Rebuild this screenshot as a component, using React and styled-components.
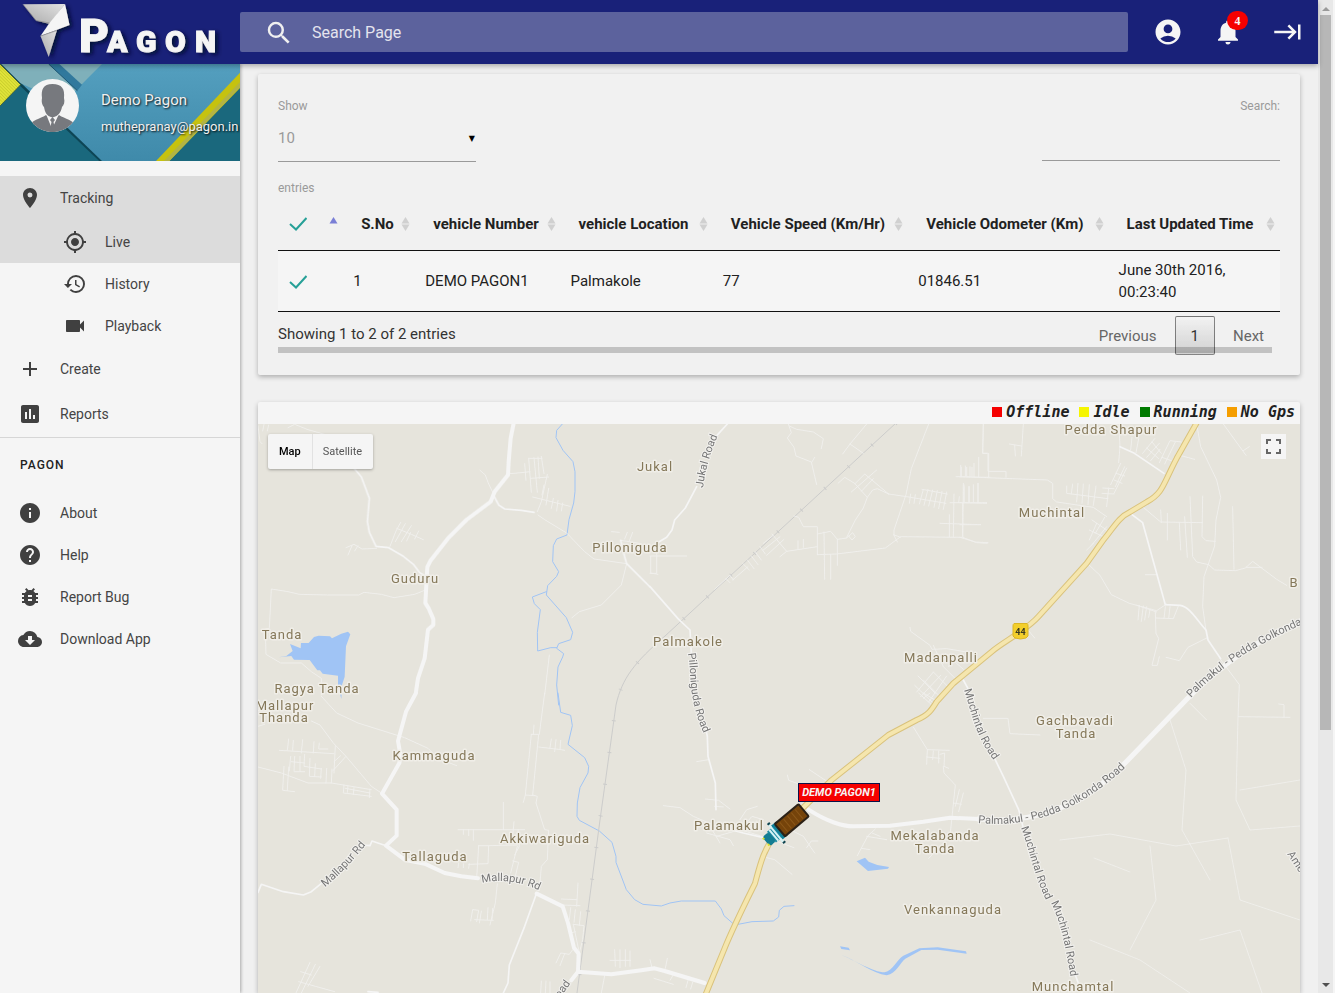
import React, { useState } from "react";
import styled, { createGlobalStyle, css } from "styled-components";
import {
  MdAccountCircle, MdAdd, MdAssessment, MdBugReport, MdCloudDownload, MdHelp, MdHistory,
  MdInfo, MdKeyboardTab, MdLocationOn, MdMyLocation, MdNotifications, MdSearch, MdVideocam,
} from "react-icons/md";

const GlobalStyle = createGlobalStyle`
  * { box-sizing: border-box; }
  body {
    margin: 0;
    background: #f0f0f0;
    color: #212121;
    font: 15px/22px Roboto, "Liberation Sans", sans-serif;
  }
  button, input, select { font: inherit; color: inherit; border: 0; margin: 0; padding: 0; background: none; outline: 0; }
  button { cursor: pointer; }
  ul { list-style: none; margin: 0; padding: 0; }
  a { color: inherit; text-decoration: none; }
`;

/* ---------- page frame ---------- */

const Shell = styled.div`
  display: grid;
  grid-template-columns: minmax(0, 1fr) 17px;
  height: 100vh;
  overflow: hidden;
`;

const Page = styled.div`
  display: grid;
  grid-template: 64px minmax(0, 1fr) / 240px minmax(0, 1fr);
  grid-template-areas: "top top" "side main";
  height: 100vh;
`;

const TopBar = styled.header`
  grid-area: top;
  z-index: 3;
  display: grid;
  grid-template-columns: 240px minmax(0, 1fr) auto;
  align-items: center;
  background: #192179;
  box-shadow: 0 2px 5px rgba(0, 0, 0, 0.3);
`;

const LogoLink = styled.a`
  display: block;
  height: 64px;
`;

const SearchBox = styled.label`
  display: flex;
  align-items: center;
  gap: 18px;
  height: 40px;
  margin-right: 10px;
  padding: 2px 0 0 24px;
  border-radius: 2px;
  background: #5c629d;
  color: #f0f0f0;
`;

const SearchInput = styled.input`
  flex: 1;
  min-width: 0;
  font-size: 16px;
  &::placeholder { color: #e4e4ee; opacity: 1; }
`;

const TopActions = styled.nav`
  display: flex;
`;

const TopButton = styled.button`
  position: relative;
  display: grid;
  place-items: center;
  width: 60px;
  height: 64px;
  color: #f5f5f5;
`;

const Badge = styled.span`
  position: absolute;
  top: 11px;
  left: 29px;
  width: 21px;
  height: 19px;
  border-radius: 10px;
  background: #f50000;
  font: bold 12px/20px "Liberation Serif", serif;
  text-align: center;
`;

const ScrollRail = styled.div`
  display: flex;
  flex-direction: column;
  align-items: center;
  gap: 4px;
  height: 100vh;
  padding: 7px 0 6px;
  border-right: 2px solid #f5f5f5;
  background: #e8e8e8;
`;

const RailArrow = styled.i`
  border: 4px solid transparent;
  ${(p) => (p.$down
    ? css`border-top-color: #505050; border-bottom: 0; margin-top: auto;`
    : css`border-bottom-color: #9a9a9a; border-top: 0;`)}
`;

const RailThumb = styled.i`
  width: 11px;
  height: 73%;
  background: #b7b7b7;
`;

/* ---------- sidebar ---------- */

const Sidebar = styled.aside`
  grid-area: side;
  z-index: 2;
  background: #f5f5f5;
  box-shadow: 1px 0 3px rgba(0, 0, 0, 0.3);
`;

const Profile = styled.section`
  position: relative;
  display: grid;
  grid-template-columns: 53px 1fr;
  gap: 22px;
  height: 97px;
  padding: 15px 0 0 26px;
  overflow: hidden;
`;

const ProfileArt = styled.svg`
  position: absolute;
  inset: 0;
  width: 100%;
  height: 100%;
`;

const Avatar = styled.svg`
  position: relative;
  width: 53px;
  height: 53px;
`;

const ProfileText = styled.div`
  position: relative;
  padding-top: 10px;
  color: #f0f0f0;
  text-shadow: 1px 1px 2px rgba(0, 0, 0, 0.9);
  white-space: nowrap;
`;

const ProfileName = styled.div`
  font-size: 15px;
  line-height: 22px;
`;

const ProfileMail = styled.div`
  margin-top: 6px;
  font-size: 13px;
  line-height: 20px;
`;

const MenuGroup = styled.ul`
  ${(p) => p.$main && css`
    margin-top: 15px;
    border-bottom: 1px solid #d6d6d6;
  `}
`;

const MenuLink = styled.a`
  display: flex;
  align-items: center;
  height: ${(p) => (p.$tall ? 45 : 42)}px;
  padding: 0 0 ${(p) => (p.$tall ? 2 : 0)}px ${(p) => (p.$sub ? 63 : 18)}px;
  gap: 18px;
  background: ${(p) => (p.$active ? "#dcdcdc" : "transparent")};
  color: #444;
  font-size: 14px;
  svg { flex: none; color: #404040; }
`;

const MenuHeading = styled.h2`
  margin: 0;
  padding-left: 20px;
  color: #222;
  font-size: 12px;
  font-weight: 500;
  line-height: 54px;
  letter-spacing: 1px;
`;

/* ---------- main column ---------- */

const Main = styled.main`
  grid-area: main;
  display: flex;
  flex-direction: column;
  gap: 27px;
  min-height: 0;
  padding: 10px 18px 0;
  overflow: hidden;
`;

const Card = styled.section`
  flex: ${(p) => (p.$grow ? "1 0 0" : "none")};
  display: flex;
  flex-direction: column;
  padding: ${(p) => (p.$flush ? "0" : "20px")};
  border-radius: 2px;
  background: ${(p) => (p.$flush ? "#f5f5f5" : "#f1f1f1")};
  box-shadow: 0 2px 5px rgba(0, 0, 0, 0.28);
`;

const Controls = styled.div`
  display: flex;
  justify-content: space-between;
  height: 105px;
  padding-top: 1px;
  color: #9a9a9a;
  font-size: 12px;
`;

const Field = styled.div`
  display: flex;
  flex-direction: column;
  width: ${(p) => (p.$right ? 238 : 198)}px;
  text-align: ${(p) => (p.$right ? "right" : "left")};
`;

const SelectWrap = styled.div`
  display: grid;
  align-items: center;
  border-bottom: 1px solid #9a9a9a;
  margin-bottom: 15px;
`;

const LengthSelect = styled.select`
  grid-area: 1 / 1;
  appearance: none;
  height: 44px;
  padding-bottom: 2px;
  font-size: 15px;
`;

const SelectArrow = styled.span`
  grid-area: 1 / 1;
  justify-self: end;
  padding-right: 1px;
  color: #000;
  font: 8px/12px "DejaVu Sans", sans-serif;
  pointer-events: none;
`;

const FilterInput = styled.input`
  height: 44px;
  border-bottom: 1px solid #9a9a9a;
  font-size: 15px;
`;

const DataTable = styled.table`
  width: 100%;
  table-layout: fixed;
  border-collapse: separate;
  border-spacing: 0;
`;

const Col = styled.col`
  width: ${(p) => p.$w}%;
`;

const HeadCell = styled.th`
  height: 52px;
  padding: 0 5px 2px ${(p) => (p.$tick ? 11 : 18)}px;
  border-bottom: 1px solid #111;
  text-align: left;
  white-space: nowrap;
`;

const HeadInner = styled.div`
  display: flex;
  align-items: center;
  justify-content: space-between;
`;

const SortButton = styled.button`
  display: grid;
  width: 9px;
  height: 14px;
`;

const BodyCell = styled.td`
  height: 61px;
  padding: 8px 10px;
  border-bottom: 1px solid #111;
  background: #f5f5f5;
  &:first-child { padding-left: 11px; }
`;

const TickLabel = styled.label`
  display: inline-grid;
  vertical-align: middle;
  > * { grid-area: 1 / 1; width: 18px; height: 14px; margin: 0; }
  input { opacity: 0; }
`;

const TableFooter = styled.footer`
  position: relative;
  display: flex;
  justify-content: space-between;
  height: 43px;
  padding-top: 4px;
`;

const FooterRail = styled.div`
  position: absolute;
  left: 0;
  right: 8px;
  bottom: 2px;
  height: 6px;
  background: #c2c2c2;
`;

const FooterInfo = styled.div`
  padding-top: 7px;
  color: #333;
`;

const Pager = styled.nav`
  position: relative;
  display: flex;
  gap: 2px;
`;

const PageButton = styled.button`
  height: 39px;
  padding: 0 15px;
  border: 1px solid transparent;
  border-radius: 2px;
  color: #666;
  ${(p) => p.$current && css`
    border-color: rgba(0, 0, 0, 0.45);
    background: linear-gradient(rgba(255, 255, 255, 0.1), rgba(0, 0, 0, 0.13));
    color: #333;
  `}
`;

/* ---------- map ---------- */

const Legend = styled.ul`
  display: flex;
  justify-content: flex-end;
  gap: 10px;
  height: 22px;
  padding-right: 5px;
  font: italic bold 15px/20px "DejaVu Sans Mono", monospace;
`;

const LegendItem = styled.li`
  display: flex;
  align-items: center;
  gap: 4px;
  height: 20px;
  &::before {
    content: "";
    width: 10px;
    height: 10px;
    background: ${(p) => p.$color};
  }
`;

const MapArea = styled.div`
  position: relative;
  flex: 1;
  min-height: 0;
  overflow: hidden;
  background: #e6e4dc;
`;

const MapSvg = styled.svg`
  position: absolute;
  inset: 0;
  width: 100%;
  height: 100%;
  font-family: Roboto, "Liberation Sans", sans-serif;
`;

const MapTypes = styled.div`
  position: absolute;
  top: 10px;
  left: 10px;
  display: flex;
  height: 35px;
  border-radius: 2px;
  background: #f5f5f5;
  box-shadow: 0 1px 3px rgba(0, 0, 0, 0.3);
`;

const MapTypeButton = styled.button`
  padding: 0 11px;
  font-size: 11px;
  color: ${(p) => (p.$on ? "#000" : "#565656")};
  font-weight: ${(p) => (p.$on ? 500 : 400)};
  & + & { border-left: 1px solid #e2e2e2; padding: 0 11px 0 10px; }
`;

const FullScreenButton = styled.button`
  position: absolute;
  top: 10px;
  right: 14px;
  display: grid;
  place-items: center;
  width: 25px;
  height: 25px;
  background: #f5f5f5;
`;

const Place = styled.text`
  font-size: 13px;
  letter-spacing: 1px;
  text-anchor: middle;
  fill: #857859;
  stroke: #f0eee8;
  stroke-width: 3px;
  stroke-linejoin: round;
  paint-order: stroke;
`;

const RoadName = styled.text`
  font-size: 11px;
  fill: #757575;
  stroke: #f2f1ee;
  stroke-width: 2px;
  paint-order: stroke;
`;

const Lines = styled.g`
  fill: none;
  stroke: ${(p) => p.$color || "#f5f5f5"};
  stroke-width: ${(p) => p.$w};
  stroke-linejoin: round;
  stroke-linecap: ${(p) => p.$cap || "round"};
  opacity: ${(p) => p.$o || 1};
`;

const TILES = {
  nw: "translate(258 395) scale(.33333)",
  n: "translate(650 420) scale(.33333)",
  ne: "translate(960 420) scale(.33333)",
  sw: "translate(258 693) scale(.33333)",
  s: "translate(640 693) scale(.33333)",
};

const PLACES = [
  ["Jukal", 655, 471], ["Pilloniguda", 630, 552], ["Guduru", 415, 583], ["Tanda", 282, 639],
  ["Ragya Tanda", 317, 693], ["Mallapur", 285, 710], ["Thanda", 284, 722], ["Kammaguda", 434, 760],
  ["Tallaguda", 435, 861], ["Akkiwariguda", 545, 843], ["Palamakul", 729, 830], ["Palmakole", 688, 646],
  ["Madanpalli", 941, 662], ["Muchintal", 1052, 517], ["Pedda Shapur", 1111, 434],
  ["Gachbavadi", 1075, 725], ["Tanda", 1076, 738], ["Mekalabanda", 935, 840], ["Tanda", 935, 853],
  ["Venkannaguda", 953, 914], ["Munchamtal", 1073, 991], ["B", 1294, 587],
];

const ROAD_NAMES = [
  ["jukal", "Jukal Road", "M703 488 Q706 462 720 430"],
  ["pillo", "Pilloniguda Road", "M688 653 C692 680 688 700 705 736"],
  ["much1", "Muchintal Road", "M964 690 C972 712 974 736 998 766"],
  ["much2", "Muchintal Road", "M1021 828 C1030 850 1034 878 1050 908"],
  ["much3", "Muchintal Road", "M1051 903 C1062 924 1066 950 1072 986"],
  ["golk1", "Palmakul - Pedda Golkonda Road", "M978 823 C1030 828 1080 812 1130 763"],
  ["golk2", "Palmakul - Pedda Golkonda", "M1191 698 C1225 662 1260 643 1312 620"],
  ["mal1", "Mallapur Rd", "M325 887 Q345 871 368 842"],
  ["mal2", "Mallapur Rd", "M482 883 Q512 876 545 893"],
  ["road", "Road", "M556 1004 L578 973"],
  ["ame", "Amee", "M1287 854 L1312 892"],
];

const HIGHWAY = "M712 5 L650 115 C610 190 610 220 560 246 L510 276 C475 292 460 325 430 360 L380 430 L235 590 C200 630 130 665 95 695 L-20 790 L-70 845 C-85 870 -95 885 -130 900 L-215 945 L-385 1080 L-555 1245 C-590 1290 -600 1335 -615 1390 C-650 1460 -670 1500 -700 1570 L-770 1740";
const RAILWAY = "M896 423 L665 636 C635 662 622 678 616 705 L600 820 577 993";

function MapDrawing() {
  return (
    <MapSvg viewBox="258 424 1042 569" preserveAspectRatio="xMinYMin slice" role="img" aria-label="Map of Palmakole">
      <g transform={TILES.nw} fill="#a0c4f5">
        <path d="M62 787 L85 783 104 768 96 747 128 760 129 744 152 744 168 726 182 722 216 724 222 730 250 716 270 710 277 718 264 754 260 845 252 870 250 912 240 870 240 842 194 836 186 826 178 826 155 795 108 794 100 783Z" />
      </g>
      <g transform={TILES.s} fill="#a0c4f5">
        <path d="M650 505 L675 494 686 506 712 516 747 522 744 527 684 534Z M600 760 L626 764 630 772 604 768Z" />
        <path d="M604 786 C640 800 700 838 734 838 C760 832 770 800 790 788 L838 766 893 763 978 775 980 782 893 770 844 771 796 797 C780 810 770 840 740 847 C700 843 650 802 604 786Z" />
      </g>

      <Lines $w={3} $color="#a0c4f5">
        <path transform={TILES.nw} d="M914 86 L896 106 894 128 915 166 945 200 951 230 951 290 947 324 933 374 927 420 896 432 886 452 884 500 902 530 896 544 869 572 865 600 925 668 944 712 938 734 902 746 896 760 917 776 914 786 900 816 896 870 902 930 M865 590 L823 606 829 626 847 644 838 712 839 768 878 758 896 758" />
        <path transform={TILES.sw} d="M900 0 L908 58 938 67 943 98 930 154 980 194 992 220 990 240 966 284 958 330 957 370 964 382 1024 414 1062 448 1074 490 1074 508 1105 590 1130 620 1155 634 1210 639 1236 630 1270 624 1372 624 1390 648 1398 668 1430 696 1482 686 1546 684 1562 672 1564 652 1578 640 1608 638" />
      </Lines>

      <Lines $w={1} $color="#cccccb">
        <path d={RAILWAY} />
      </Lines>
      <Lines $w={4} $color="#cccccb" $cap="butt">
        <path d={RAILWAY} strokeDasharray="1 31" />
      </Lines>

      <Lines $w={3} $o={0.65}>
        <path transform={TILES.nw} d="M90 98 L110 88 150 104 200 118 M666 226 L682 240 690 262 706 296 M396 454 L414 408 428 382 M416 400 L460 418 496 434 M412 440 L442 386 M430 440 L460 392 M446 438 L458 412 M470 432 L482 408 M356 460 L312 462 288 448 264 458 M270 480 L282 452 M290 468 L300 452 M840 360 L860 374 926 414 980 470 1008 492 1106 506 1090 570 1030 630 964 650 942 668 M756 236 L800 232 816 230 M812 190 L852 190 M812 190 L820 292 M828 188 L838 292 M840 186 L844 250 M850 184 L858 236 M800 206 L804 256 M818 250 L872 246 M868 238 L850 320 838 350 M858 270 L852 300 M824 306 L936 334 M872 280 L864 330 M886 310 L880 340 M900 316 L896 348 M914 324 L910 348 M500 586 L470 598 408 608 370 598 318 592 302 600 208 600 124 598 90 590 40 582 34 700 22 702 24 778 68 804 130 804 160 830 190 850 190 900 M0 92 L6 140 12 146 M18 88 L14 108 M32 90 L28 108 M1088 436 L1150 446 M1060 410 L1084 412 M1100 432 L1108 412 M1114 438 L1124 412 M874 780 L860 900 M1178 484 L1178 534 1200 538" />
        <path transform={TILES.n} d="M415 12 L424 38 412 54 432 82 438 108 484 126 500 194 M418 18 L440 28 490 36 520 56 514 86 M486 126 L494 112 M650 12 L600 72 578 102 M600 72 L640 100 M836 12 L784 146 768 224 732 330 732 346 742 366 M564 190 L584 172 614 190 632 210 652 232 M614 192 L644 162 716 222 M604 216 L680 150 M634 214 L670 176 M716 222 L682 206 668 210 652 232 640 264 616 300 590 352 M716 222 L770 230 888 250 M816 208 L892 222 M782 222 L778 250 M796 224 L792 250 M820 208 L808 252 M834 208 L822 256 M848 210 L836 258 M862 212 L852 262 M876 214 L866 266 M890 216 L880 268 M432 288 L446 292 460 320 502 320 502 404 M502 342 L542 334 562 358 590 354 608 338 616 350 606 360 596 348 M522 336 L524 478 M542 404 L542 478 M562 358 L562 436 M410 394 L502 380 M502 404 L560 402 706 384 752 350 938 352 980 368 1012 370 M730 344 L752 352 M366 342 L410 394 390 410 M340 370 L370 346 M340 390 L390 350 M350 406 L402 358 M330 380 L346 402 M316 396 L334 420 M304 408 L324 434 M292 420 L312 446 M278 430 L298 450 M248 480 L294 440 M240 466 L250 480 M228 476 L240 488 M444 362 L444 388 M460 358 L460 382 M194 508 L240 466 M0 408 L110 408 M20 400 L20 460 0 460 M940 190 L938 350 M912 222 L910 350 M898 284 L898 350 M870 310 L992 314 M900 248 L1010 248 M928 230 L926 248 M942 200 L942 248 M956 200 L956 248 M970 194 L970 248 M984 190 L984 248 M932 136 L932 170 M946 138 L946 170 M960 140 L960 170 M972 130 L972 170 M986 112 L986 170 M918 170 L1020 172 M1000 12 L998 100 1016 100 1016 170 M780 622 L782 634 840 676 846 688 890 686 950 696 M850 676 L880 740 916 776 M886 700 L940 748 M896 740 L914 710 M804 768 L856 820 M794 796 L850 850 M820 780 L870 830 M850 756 L900 806 M800 816 L850 756 M812 830 L872 766 M836 846 L890 768" />
        <path transform={TILES.ne} d="M70 12 L68 100 84 100 84 154 138 154 138 172 M0 170 L262 180 278 190 278 236 290 246 400 262 440 290 M190 12 L184 108 M148 72 L184 78 M164 76 L166 108 M4 142 L4 168 M20 142 L20 168 M36 142 L36 168 M12 194 L12 248 M28 200 L28 248 M54 190 L54 246 M0 248 L80 250 M8 250 L8 352 M0 314 L60 314 M0 352 L46 366 84 368 M320 198 L320 220 444 236 M338 192 L334 222 M354 190 L350 246 M370 192 L366 250 M388 194 L384 254 M408 198 L400 256 M428 204 L462 206 M426 220 L462 222 M440 260 L446 204 M462 220 L500 144 M452 194 L482 130 M466 200 L494 140 M462 180 L486 190 M468 160 L494 168 M476 128 L480 80 478 40 M512 90 L516 52 M528 98 L536 56 M548 100 L584 56 M560 112 L598 70 M572 122 L600 88 M560 84 L596 116 M576 66 L604 100 M598 128 L630 62 664 66 M614 132 L646 66 M632 134 L662 76 M606 112 L634 122 M652 104 L704 118 M710 12 L722 80 770 180 782 232 768 300 764 378 732 470 728 560 738 632 M396 300 L440 330 M406 340 L434 292 M388 360 L410 310 M398 372 L440 320 M380 390 L400 370 M388 330 L430 350 M384 432 L420 466 454 524 508 550 590 572 620 552 M550 262 L602 306 728 308 M602 270 L604 308 M622 280 L622 360 M658 308 L662 390 M674 290 L682 412 M690 230 L698 410 710 426 746 434 M728 228 L726 350 738 362 766 364 M746 434 L764 450 826 452 856 444 878 424 950 478 980 496 M818 260 L822 448 M858 442 L906 442 M556 464 L592 464 M538 556 L534 600 M550 558 L544 604 M560 560 L554 600 M570 568 L566 592 M530 556 L590 576 M586 576 L588 640 596 656 576 736 592 736 598 710 M588 594 L640 596 656 556 M612 596 L616 560 M626 596 L630 560 M740 654 L684 682 658 722 618 712 M790 12 L858 106 M850 92 L868 80 M780 716 L838 794 834 890 990 892 M956 852 L972 854 972 892 M690 850 L740 900 M204 630 L224 654" />
        <path transform={TILES.sw} d="M190 10 L236 60 300 90 440 134 510 166 540 196 596 218 M64 172 L228 182 M92 138 L88 172 M106 142 L104 172 M134 140 L130 180 M168 146 L166 180 M184 150 L182 168 210 168 M98 190 L94 234 M110 190 L108 236 140 236 M100 206 L140 210 M126 190 L126 236 M140 184 L138 220 190 228 M156 196 L154 250 190 252 M172 212 L170 250 M190 226 L188 256 M206 226 L204 270 M222 228 L220 270 M78 220 L74 292 110 296 M92 222 L88 292 M160 84 L186 96 226 150 264 190 340 280 370 300 M264 190 L224 234 M232 158 L228 240 M228 206 L248 188 M0 222 L70 240 150 270 220 270 340 290 M258 276 L256 300 340 310 M262 286 L336 300 M270 278 L268 298 M288 284 L286 304 M336 288 L334 314 M0 100 L20 94 M820 124 L842 124 824 306 838 310 834 330 860 410 872 412 868 500 850 520 844 592 M828 96 L826 124 M820 124 L802 306 830 308 M802 306 L796 328 M842 162 L910 170 920 172 M880 138 L876 164 M894 140 L890 176 M908 142 L906 170 M860 0 L844 124 M600 410 L800 410 M616 410 L616 424 M632 410 L632 428 M646 410 L646 442 M736 328 L736 410 M768 386 L764 430 M780 410 L784 460 770 486 M662 458 L692 458 690 512 632 514 M662 458 L656 556 M692 458 L778 456 M778 460 L768 500 758 540 M764 504 L782 508 772 550 M602 510 L600 524 M616 512 L616 524 M634 512 L632 526 M718 572 L712 630 696 696 M644 650 L638 684 M646 650 L662 652 656 686 M670 654 L664 690 M650 680 L706 682 M690 644 L688 680 M704 646 L702 680 M960 570 L956 640 M910 618 L956 620 M910 636 L966 638 M938 644 L934 680 M952 650 L948 688 M968 656 L964 698 M946 694 L978 698 974 740 964 780 M946 694 L962 770 M940 720 L952 716 M944 770 L934 784 908 780 894 810 M920 782 L906 818 M1070 770 L1072 820 M1086 770 L1086 824 M1102 770 L1102 820 M1116 774 L1116 820 M1056 802 L1118 802 M850 864 L848 900 M864 864 L862 900 M876 866 L876 900 M1040 848 L1030 900 M156 808 L114 900 M172 814 L130 900 M186 820 L150 880 M128 836 L160 846 M122 866 L230 896" />
        <path transform={TILES.s} d="M836 0 L880 40 M850 0 L900 30 M870 0 L850 16 M820 102 L862 170 928 172 M862 170 L860 214 M880 174 L878 200 M896 174 L896 210 M860 192 L900 196 M900 184 L914 180 912 220 926 226 M910 220 L912 240 946 276 930 430 866 496 M958 290 L946 340 M970 300 L956 356 M940 330 L964 334 M70 338 L120 344 160 370 230 400 M196 318 L236 322 270 348 M224 340 L250 342 M300 380 L320 350 352 340 M310 400 L336 370 370 380 M322 410 L350 384 M200 420 L270 440 280 458 M210 400 L240 450 M230 430 L300 410 380 434 462 464 M442 246 L446 262 474 272 M508 230 L568 270 M450 410 L490 430 524 480 M500 464 L514 444 534 444 M380 494 L404 500 456 544 M652 488 L684 428 706 408 M680 430 L740 440 M664 466 L690 470 M696 420 L720 430 M1030 76 L1104 76 1110 122 1200 126 M170 206 L206 200 M82 796 L76 826 M30 800 L36 824 M42 856 L100 874 M90 862 L102 842 M138 884 L144 862 M152 888 L158 868" />
      </Lines>

      <Lines $w={1} $o={0.55}>
        <path d="M1238 717 L1236 800 1250 830 1300 826 M1170 720 L1186 770 1182 830 1210 880 M1060 840 L1110 834 1176 846 1228 838 M1150 846 L1156 900 1130 950 M1228 838 L1240 900 1300 920 M1094 858 L1130 872 M1200 940 L1240 930 1262 993 M1240 790 L1300 780 M1090 940 L1140 960 1190 993" />
      </Lines>

      <Lines $w={5}>
        <path transform={TILES.nw} d="M290 222 L310 246 334 310 328 380 334 412 354 454 392 458 436 484 466 508 484 532 500 542 M706 300 L722 330 740 342 790 346 828 352 M1088 436 L1100 486 1106 506 1160 560 1176 576" />
        <path transform={TILES.n} d="M232 12 L192 56 M140 200 L106 264 74 300 66 330 50 352 20 370 M0 500 L84 596 120 630 124 700" />
        <path transform={TILES.ne} d="M480 80 L520 98 612 160 M516 284 L548 308 616 554 660 556 C690 560 710 600 738 630 L744 660 782 716 M10 780 L24 806" />
        <path transform={TILES.sw} d="M0 598 L10 574 76 596 136 606 160 596 194 568 M308 456 L336 458 342 444 384 458 M836 600 L800 700 754 816 750 870 736 900 M330 896 L360 898" />
        <path transform={TILES.s} d="M196 100 L202 130 204 190 226 270 228 350 M228 398 L310 420 380 436 M1058 184 L1090 250 1136 350 1150 405 M1300 830 L1326 900" />
      </Lines>

      <Lines $w={12}>
        <path transform={TILES.nw} d="M768 80 L758 130 752 200 750 240 710 290 698 320 626 374 570 430 518 496 508 516 502 624 512 640 526 672 526 690 510 704 500 790 480 850 474 890" />
        <path transform={TILES.sw} d="M474 0 L444 56 420 144 428 190 424 210 372 302 416 350 416 428 384 458 440 500 500 512 560 540 610 550 660 556 M836 602 L914 640 930 690 948 764 962 782 960 836 940 862 M960 836 L1060 844 1150 832 1190 826 1220 834 1340 870" />
        <path transform={TILES.s} d="M506 350 C560 386 610 400 640 400 L750 398 850 386 930 374 1016 378" />
        <path d="M978 819 C1030 824 1080 810 1128 760 L1187 699 C1225 660 1260 640 1304 619" strokeWidth="5" />
      </Lines>

      <g transform={TILES.ne}>
        <Lines $w={18} $color="#d9c27c"><path d={HIGHWAY} /></Lines>
        <Lines $w={12} $color="#f5e6ae"><path d={HIGHWAY} /></Lines>
      </g>

      {PLACES.map(([name, x, y]) => <Place key={name + y} x={x} y={y}>{name}</Place>)}

      {ROAD_NAMES.map(([id, name, d]) => (
        <React.Fragment key={id}>
          <path id={id} d={d} fill="none" />
          <RoadName><textPath href={"#" + id}>{name}</textPath></RoadName>
        </React.Fragment>
      ))}

      <path d="M1014 623.500H1027Q1028 624 1028 626V636L1026 638 1020.500 639 1015 638 1013 636V626Q1013 624 1014 623.500Z" fill="#f3cf2c" stroke="#dcb624" />
      <text x="1020.500" y="635" textAnchor="middle" fontSize="9" fontWeight="700" fill="#3a3a20">44</text>

      <g transform="translate(786 825) rotate(-40)">
        <rect x="-12" y="-9" width="7" height="18" fill="#108098" />
        <rect x="-19" y="-7" width="8" height="14" fill="#1f8ca3" />
        <rect x="-26" y="-6" width="8" height="12" rx="3" fill="#137d93" />
        <path d="M-16 -7V7M-13 -11V11" stroke="#d6f3f5" strokeWidth="2" />
        <path d="M-14 -12H-11M-14 12H-11" stroke="#0d4450" strokeWidth="2" />
        <path d="M-26 -5V-3M-26 3V5" stroke="#d8df2f" strokeWidth="2" />
        <rect x="-8" y="-8" width="31" height="16" rx="1" fill="#75430a" stroke="#2c2116" strokeWidth="2" />
        <path d="M-3 -6V6M2 -6V6M7 -6V6M12 -6V6M17 -6V6" stroke="#8b5719" strokeWidth="1" />
      </g>
      <rect x="798.500" y="783.500" width="81" height="18" fill="#f50000" stroke="#0b1248" />
      <text x="839" y="796" textAnchor="middle" fontSize="11" fontWeight="700" fontStyle="italic" fill="#f5f5f5">DEMO PAGON1</text>
    </MapSvg>
  );
}

/* ---------- small drawings ---------- */

function Logo() {
  return (
    <svg width="240" height="64" viewBox="0 0 240 64" role="img" aria-label="Pagon">
      <defs>
        <linearGradient id="fold" x1="0" y1="1" x2="1" y2="0">
          <stop offset="0" stopColor="#a9a9a9" />
          <stop offset="1" stopColor="#e2e2e2" />
        </linearGradient>
        <filter id="cast" x="-20%" y="-20%" width="150%" height="150%">
          <feDropShadow dx="3" dy="2" stdDeviation="2" floodColor="#060a33" floodOpacity="0.9" />
        </filter>
      </defs>
      <g filter="url(#cast)">
        <path d="M23 4.300 65 4 49.500 24 36 20.500Z" fill="url(#fold)" />
        <path d="M65 4 69.500 25 40.500 36 49.500 23Z" fill="#f5f5f5" />
        <path d="M40.500 36 57 30 48.700 57Z" fill="url(#fold)" />
        <path d="M23 4.300 36 20.500 49.500 23M40.500 36 57 30.500" fill="none" stroke="#8d8d8d" strokeWidth=".7" />
        <g fill="#f5f5f5" stroke="#f5f5f5" strokeWidth="1" fontFamily="Roboto, sans-serif" fontWeight="900">
          <text x="79" y="52" fontSize="46">P</text>
          <text x="107 136 165 195" y="52" fontSize="30">AGON</text>
        </g>
      </g>
    </svg>
  );
}

function ProfileBackdrop() {
  return (
    <ProfileArt viewBox="0 192 720 291" preserveAspectRatio="none" aria-hidden="true">
      <defs>
        <linearGradient id="sky" x1="0" y1="0" x2="0" y2="1">
          <stop offset="0" stopColor="#549fbf" />
          <stop offset="1" stopColor="#3f8aaa" />
        </linearGradient>
        <pattern id="ridge" width="7" height="7" patternUnits="userSpaceOnUse" patternTransform="rotate(45)">
          <rect width="7" height="7" fill="#e0e33a" />
          <rect width="7" height="2" fill="#c6ca28" />
        </pattern>
      </defs>
      <rect y="192" width="720" height="291" fill="#1a687d" />
      <path d="M0 200 L305 490 480 490 720 235 720 192 0 192Z" fill="#0d4555" />
      <path d="M4 192 L306 483 480 483 720 240 720 192Z" fill="url(#sky)" />
      <path d="M4 192 H306 L190 308 62 250Z" fill="#7fb0ba" />
      <path d="M146 192 H178 L246 254 232 272Z" fill="#31799d" />
      <path d="M146 192 L232 272" stroke="#1c5673" strokeWidth="3" />
      <path d="M0 192 L62 254 0 318Z" fill="url(#ridge)" />
      <path d="M0 192 L62 254 0 318" fill="none" stroke="#2d4b30" strokeWidth="2" />
      <path d="M720 218 V264 L508 483 H468Z" fill="#c6c20f" />
      <path d="M720 246 V262 L508 483 H492Z" fill="#b3b444" />
    </ProfileArt>
  );
}

function AvatarArt() {
  return (
    <Avatar viewBox="0 0 53 53" role="img" aria-label="Demo Pagon">
      <clipPath id="disc"><circle cx="26.500" cy="26.500" r="26.500" /></clipPath>
      <g clipPath="url(#disc)">
        <rect width="53" height="53" fill="#f5f5f5" />
        <path d="M4 47 C5 41 14 40 20 36 L26.500 40 33 36 C39 40 48 41 49 47 L46 54H7Z" fill="#77797e" />
        <path d="M20 35 L26 50 33 35Z" fill="#f5f5f5" />
        <path d="M26.500 38 L29 41 27.500 43 30 54H23L25.500 43 24 41Z" fill="#77797e" />
        <path d="M26.500 5C17 5 15 11 16 19C15 24 17 27 18 28C19 33 20 37 26.500 38.500C33 37 35 33 36 28C38 26 39 23 38 19C39 10 36 5 26.500 5Z" fill="#77797e" />
      </g>
    </Avatar>
  );
}

function SortMark({ active, label }) {
  return (
    <SortButton type="button" aria-label={"Sort by " + label}>
      <svg width="9" height="14" viewBox="0 0 9 14">
        <path d="M4.500 0 8.500 6.500H.5Z" fill={active ? "#7a7fd6" : "#d0d0d0"} />
        {!active && <path d="M4.500 14 8.500 7.500H.5Z" fill="#d0d0d0" />}
      </svg>
    </SortButton>
  );
}

function Tick({ label }) {
  const [on, setOn] = useState(true);
  return (
    <TickLabel>
      <svg viewBox="0 0 18 14" aria-hidden="true">
        {on && <path d="M1 7 7 12.500 17.500 1" fill="none" stroke="#26a097" strokeWidth="2" />}
      </svg>
      <input type="checkbox" aria-label={label} checked={on} onChange={() => setOn(!on)} />
    </TickLabel>
  );
}

/* ---------- data ---------- */

const MAIN_MENU = [
  { icon: MdLocationOn, label: "Tracking", tall: true, active: true },
  { icon: MdMyLocation, label: "Live", sub: true, active: true },
  { icon: MdHistory, label: "History", sub: true },
  { icon: MdVideocam, label: "Playback", sub: true },
  { icon: MdAdd, label: "Create", tall: true },
  { icon: MdAssessment, label: "Reports", tall: true },
];

const INFO_MENU = [
  { icon: MdInfo, label: "About" },
  { icon: MdHelp, label: "Help" },
  { icon: MdBugReport, label: "Report Bug" },
  { icon: MdCloudDownload, label: "Download App" },
];

const COLUMNS = [
  ["S.No", 7.2], ["vehicle Number", 14.5], ["vehicle Location", 15.2],
  ["Vehicle Speed (Km/Hr)", 19.5], ["Vehicle Odometer (Km)", 20], ["Last Updated Time", 17.1],
];

const ROW = ["1", "DEMO PAGON1", "Palmakole", "77", "01846.51", "June 30th 2016, 00:23:40"];

const STATES = [["Offline", "#f50000"], ["Idle", "#f5f500"], ["Running", "#007b00"], ["No Gps", "#f59e00"]];

function Menu({ items, main }) {
  return (
    <MenuGroup $main={main}>
      {items.map(({ icon: Icon, label, sub, tall, active }) => (
        <li key={label}>
          <MenuLink href="#" $sub={sub} $tall={tall} $active={active}><Icon size={24} />{label}</MenuLink>
        </li>
      ))}
    </MenuGroup>
  );
}

export default function App() {
  return (
    <Shell>
      <GlobalStyle />
      <Page>
        <TopBar>
          <LogoLink href="#"><Logo /></LogoLink>
          <SearchBox>
            <MdSearch size={30} />
            <SearchInput type="search" placeholder="Search Page" aria-label="Search Page" />
          </SearchBox>
          <TopActions>
            <TopButton type="button" aria-label="Account"><MdAccountCircle size={30} /></TopButton>
            <TopButton type="button" aria-label="Notifications"><MdNotifications size={30} /><Badge>4</Badge></TopButton>
            <TopButton type="button" aria-label="Log out"><MdKeyboardTab size={30} /></TopButton>
          </TopActions>
        </TopBar>

        <Sidebar>
          <Profile>
            <ProfileBackdrop />
            <AvatarArt />
            <ProfileText>
              <ProfileName>Demo Pagon</ProfileName>
              <ProfileMail>muthepranay@pagon.in</ProfileMail>
            </ProfileText>
          </Profile>
          <Menu items={MAIN_MENU} main />
          <MenuHeading>PAGON</MenuHeading>
          <Menu items={INFO_MENU} />
        </Sidebar>

        <Main>
          <Card>
            <Controls>
              <Field>
                <label htmlFor="length">Show</label>
                <SelectWrap>
                  <LengthSelect id="length" defaultValue="10">
                    <option>10</option>
                    <option>25</option>
                    <option>50</option>
                  </LengthSelect>
                  <SelectArrow aria-hidden="true">▼</SelectArrow>
                </SelectWrap>
                <span>entries</span>
              </Field>
              <Field $right>
                <label htmlFor="filter">Search:</label>
                <FilterInput id="filter" type="text" />
              </Field>
            </Controls>

            <DataTable>
              <colgroup>
                <Col $w={6.5} />
                {COLUMNS.map(([name, w]) => <Col key={name} $w={w} />)}
              </colgroup>
              <thead>
                <tr>
                  <HeadCell $tick><HeadInner><Tick label="Select all" /><SortMark active label="selection" /></HeadInner></HeadCell>
                  {COLUMNS.map(([name]) => (
                    <HeadCell key={name}><HeadInner>{name}<SortMark label={name} /></HeadInner></HeadCell>
                  ))}
                </tr>
              </thead>
              <tbody>
                <tr>
                  <BodyCell><Tick label="Select DEMO PAGON1" /></BodyCell>
                  {ROW.map((value) => <BodyCell key={value}>{value}</BodyCell>)}
                </tr>
              </tbody>
            </DataTable>

            <TableFooter>
              <FooterRail />
              <FooterInfo>Showing 1 to 2 of 2 entries</FooterInfo>
              <Pager aria-label="Table pages">
                <PageButton type="button">Previous</PageButton>
                <PageButton type="button" $current>1</PageButton>
                <PageButton type="button">Next</PageButton>
              </Pager>
            </TableFooter>
          </Card>

          <Card $flush $grow>
            <Legend>
              {STATES.map(([name, color]) => <LegendItem key={name} $color={color}>{name}</LegendItem>)}
            </Legend>
            <MapArea>
              <MapDrawing />
              <MapTypes>
                <MapTypeButton type="button" $on>Map</MapTypeButton>
                <MapTypeButton type="button">Satellite</MapTypeButton>
              </MapTypes>
              <FullScreenButton type="button" aria-label="Full screen">
                <svg width="15" height="15" viewBox="0 0 15 15" fill="none" stroke="#666" strokeWidth="2">
                  <path d="M1 5V1H5M10 1H14V5M14 10V14H10M5 14H1V10" />
                </svg>
              </FullScreenButton>
            </MapArea>
          </Card>
        </Main>
      </Page>

      <ScrollRail aria-hidden="true">
        <RailArrow />
        <RailThumb />
        <RailArrow $down />
      </ScrollRail>
    </Shell>
  );
}
